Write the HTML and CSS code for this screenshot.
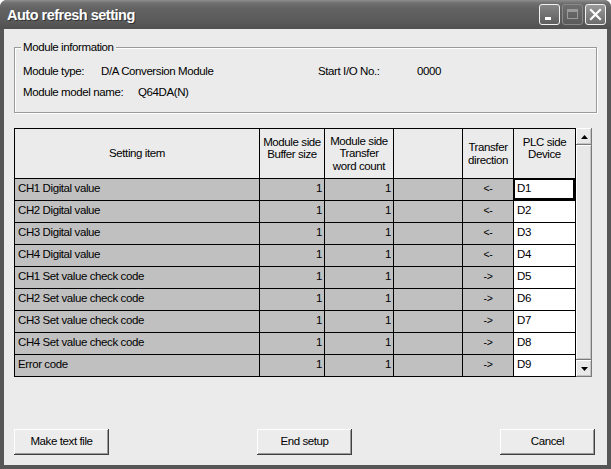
FILE: index.html
```html
<!DOCTYPE html>
<html>
<head>
<title>Auto refresh setting</title>
<link rel="stylesheet" href="styles.css">
</head>
<body>
<div class="window">
  <div class="titlebar">
    <span class="title">Auto refresh setting</span>
    <div class="caption-buttons">
      <span class="cap-btn">
        <svg width="19" height="19" viewBox="0 0 19 19"><rect x="5" y="12" width="6" height="3" fill="#fff"/></svg>
      </span>
      <span class="cap-btn disabled">
        <svg width="19" height="19" viewBox="0 0 19 19"><rect x="4.5" y="4.5" width="10" height="9" fill="none" stroke="#9a9a9a"/><line x1="4.5" y1="6" x2="14.5" y2="6" stroke="#9a9a9a" stroke-width="2"/></svg>
      </span>
      <span class="cap-btn close">
        <svg width="19" height="19" viewBox="0 0 19 19"><path d="M5 5 L14 14 M14 5 L5 14" stroke="#fff" stroke-width="2.2" stroke-linecap="square"/></svg>
      </span>
    </div>
  </div>

  <div class="client">
    <div class="group">
      <span class="group-label">Module information</span>
      <div class="info-row first">
        <span>Module type:</span>
        <span>D/A Conversion Module</span>
        <span>Start I/O No.:</span>
        <span>0000</span>
      </div>
      <div class="info-row second">
        <span>Module model name:</span>
        <span>Q64DA(N)</span>
      </div>
    </div>

    <div class="grid-wrap">
      <div class="grid">
        <div class="cell hd">Setting item</div>
        <div class="cell hd raise">Module side<br>Buffer size</div>
        <div class="cell hd">Module side<br>Transfer<br>word count</div>
        <div class="cell hd"></div>
        <div class="cell hd">Transfer<br>direction</div>
        <div class="cell hd raise">PLC side<br>Device</div>

        <div class="cell item">CH1 Digital value</div><div class="cell num">1</div><div class="cell num">1</div><div class="cell blank"></div><div class="cell dir">&lt;-</div><div class="cell dev focus">D1</div>
        <div class="cell item">CH2 Digital value</div><div class="cell num">1</div><div class="cell num">1</div><div class="cell blank"></div><div class="cell dir">&lt;-</div><div class="cell dev">D2</div>
        <div class="cell item">CH3 Digital value</div><div class="cell num">1</div><div class="cell num">1</div><div class="cell blank"></div><div class="cell dir">&lt;-</div><div class="cell dev">D3</div>
        <div class="cell item">CH4 Digital value</div><div class="cell num">1</div><div class="cell num">1</div><div class="cell blank"></div><div class="cell dir">&lt;-</div><div class="cell dev">D4</div>
        <div class="cell item">CH1 Set value check code</div><div class="cell num">1</div><div class="cell num">1</div><div class="cell blank"></div><div class="cell dir">-&gt;</div><div class="cell dev">D5</div>
        <div class="cell item">CH2 Set value check code</div><div class="cell num">1</div><div class="cell num">1</div><div class="cell blank"></div><div class="cell dir">-&gt;</div><div class="cell dev">D6</div>
        <div class="cell item">CH3 Set value check code</div><div class="cell num">1</div><div class="cell num">1</div><div class="cell blank"></div><div class="cell dir">-&gt;</div><div class="cell dev">D7</div>
        <div class="cell item">CH4 Set value check code</div><div class="cell num">1</div><div class="cell num">1</div><div class="cell blank"></div><div class="cell dir">-&gt;</div><div class="cell dev">D8</div>
        <div class="cell item">Error code</div><div class="cell num">1</div><div class="cell num">1</div><div class="cell blank"></div><div class="cell dir">-&gt;</div><div class="cell dev">D9</div>
      </div>

      <div class="scroll">
        <div class="sb-btn">
          <svg width="7" height="4" viewBox="0 0 7 4"><polygon points="0,4 7,4 3.5,0" fill="#000"/></svg>
        </div>
        <div class="sb-thumb"></div>
        <div class="sb-btn">
          <svg width="7" height="4" viewBox="0 0 7 4"><polygon points="0,0 7,0 3.5,4" fill="#000"/></svg>
        </div>
      </div>
    </div>

    <div class="actions">
      <button type="button" class="btn">Make text file</button>
      <button type="button" class="btn">End setup</button>
      <button type="button" class="btn">Cancel</button>
    </div>
  </div>
</div>
</body>
</html>
```

FILE: styles.css
```css
* { box-sizing: border-box; }

body {
  margin: 0;
  background: #fff;
  font-family: "Liberation Sans", Arial, sans-serif;
  font-size: 11.5px;
  letter-spacing: -0.4px;
  color: #000;
}

.window {
  width: 611px;
  height: 469px;
  display: flex;
  flex-direction: column;
  background: #565656;
  border-radius: 7px 7px 0 0;
  overflow: hidden;
}

/* title bar */
.titlebar {
  height: 29px;
  flex: none;
  display: flex;
  align-items: center;
  justify-content: space-between;
  padding: 0 5px 0 7px;
  background: linear-gradient(#8e8e8e 0, #707070 3px, #626262 9px, #5b5b5b 20px, #505050 29px);
}
.title {
  color: #fff;
  font-weight: bold;
  font-size: 14.5px;
  letter-spacing: -0.5px;
  text-shadow: 1px 1px 0 #333;
}
.caption-buttons { display: flex; gap: 2px; }
.cap-btn {
  width: 21px;
  height: 21px;
  border: 1px solid #f2f2f2;
  border-radius: 3px;
  background: linear-gradient(#858585, #5e5e5e);
  display: flex;
}
.cap-btn.disabled { border-color: #8a8a8a; background: linear-gradient(#6e6e6e, #5a5a5a); }
.cap-btn.close { background: linear-gradient(#9a9a9a, #6c6c6c); }

/* client area */
.client {
  flex: 1;
  margin: 0 4px 4px;
  background: #ebebeb;
  padding: 18px 10px 0;
  display: flex;
  flex-direction: column;
}

.group {
  position: relative;
  height: 66px;
  border: 1px solid #9a9a9a;
  box-shadow: 1px 1px 0 #fff, inset 1px 1px 0 #fff;
  padding: 12px 0 0 8px;
}
.group-label {
  position: absolute;
  top: -8px;
  left: 6px;
  padding: 0 2px;
  background: #ebebeb;
  line-height: 15px;
}
.info-row { display: grid; height: 21px; align-items: center; white-space: nowrap; }
.info-row.first { grid-template-columns: 78px 217px 99px auto; }
.info-row.second { grid-template-columns: 115px auto; }

/* setting table */
.grid-wrap { display: flex; margin-top: 15px; }
.grid {
  display: grid;
  grid-template-columns: 244px 64px 68px 68px 50px 61px;
  grid-template-rows: 49px repeat(9, 21px);
  gap: 1px;
  padding: 1px;
  background: #000;
  width: 562px;
}
.cell {
  display: flex;
  align-items: center;
  padding: 0 3px 3px;
  white-space: nowrap;
  line-height: 12.5px;
  background: #c0c0c0;
}
.hd { background: #ebebeb; justify-content: center; text-align: center; padding: 0 2px; }
.hd.raise { padding-bottom: 11px; }
.num { justify-content: flex-end; padding-right: 2px; }
.dir { justify-content: center; font-size: 10.5px; }
.dev { background: #fff; }
.focus { box-shadow: inset -2px -2px 0 #000, inset 1px 1px 0 #000; }

.scroll {
  width: 16px;
  display: flex;
  flex-direction: column;
  background: #e4e4e4;
}
.sb-btn, .sb-thumb {
  background: #e8e8e8;
  box-shadow: inset -1px -1px 0 #7a7a7a, inset 1px 1px 0 #fff, inset -2px -2px 0 #c4c4c4;
}
.sb-btn {
  height: 17px;
  display: flex;
  align-items: center;
  justify-content: center;
}
.sb-thumb { flex: 1; }

/* bottom buttons */
.actions {
  margin-top: 52px;
  display: flex;
  justify-content: space-between;
  padding-right: 2px;
}
.btn {
  width: 95px;
  height: 26px;
  font: inherit;
  letter-spacing: inherit;
  color: #000;
  background: #ececec;
  border: none;
  padding: 0 0 2px;
  box-shadow: inset -1px -1px 0 #404040, inset 1px 1px 0 #fff, inset -2px -2px 0 #9a9a9a;
}
```
